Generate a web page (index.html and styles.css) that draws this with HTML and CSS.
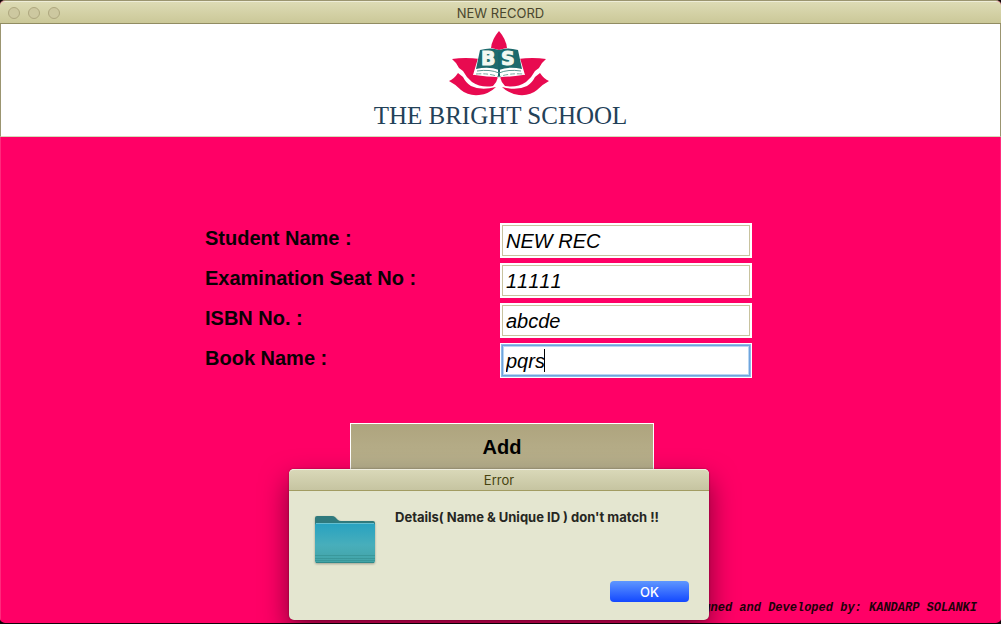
FILE: index.html
```html
<!DOCTYPE html>
<html lang="en">
<head>
<meta charset="utf-8">
<title>NEW RECORD</title>
<link rel="stylesheet" href="styles.css">
</head>
<body>
<div class="window">
  <header class="titlebar">
    <div class="lights">
      <button class="light" type="button" aria-label="Close"></button>
      <button class="light" type="button" aria-label="Minimize"></button>
      <button class="light" type="button" aria-label="Zoom"></button>
    </div>
    <h1 class="window-title">NEW RECORD</h1>
  </header>
  <div class="banner">
    <svg class="logo" viewBox="0 0 103 68" role="img" aria-label="Lotus with an open book">
      <defs>
        <g id="petals">
          <path d="M5 29Q18 27 33 29L28 45Q40 47 51 47Q50 52 46 56Q34 58 25 52Q19 47 16 41L12 38Q10 33 5 29Z"/>
          <path d="M11 43Q7 49 2 51Q8 54 14 60Q21 66 32 65Q42 64 49 57Q34 61 24 56Q19 53 16 47Z"/>
        </g>
      </defs>
      <g fill="#e80a50">
        <path d="M52 1Q45 9 44 18L47 25H58L60 18Q59 9 52 1Z"/>
        <use href="#petals"/>
        <use href="#petals" transform="translate(104 0) scale(-1 1)"/>
      </g>
      <path d="M34 18Q44 17 52 20Q60 17 70 18L78 45Q62 43 52 48Q42 43 26 45Z" fill="#fff"/>
      <path d="M33 20Q44 17 52 20Q60 17 71 20L75 39Q62 36 52 40Q42 36 29 39Z" fill="#1d6a6d"/>
      <path d="M51 22V47H53V22Z" fill="#17666b"/>
      <path d="M30 41Q43 39 52 43Q61 39 74 41" fill="none" stroke="#5b9690" stroke-width="1"/>
      <path d="M29 44Q43 43 52 47Q61 43 76 44" fill="none" stroke="#79a8a0" stroke-dasharray="5 2"/>
      <g class="logo-letters">
        <text x="34" y="35">B</text>
        <text x="54" y="35">S</text>
      </g>
    </svg>
    <p class="school">THE BRIGHT SCHOOL</p>
  </div>
  <main class="content">
    <form class="form">
      <div class="fields">
        <label for="student">Student Name :</label>
        <div class="field"><input id="student" type="text" value="NEW REC"></div>
        <label for="seat">Examination Seat No :</label>
        <div class="field"><input id="seat" type="text" value="11111"></div>
        <label for="isbn">ISBN No. :</label>
        <div class="field"><input id="isbn" type="text" value="abcde"></div>
        <label for="book">Book Name :</label>
        <div class="field active"><input id="book" type="text" value="pqrs"><span class="caret"></span></div>
      </div>
      <button class="add" type="button">Add</button>
    </form>
    <footer class="credit">Designed and Developed by: KANDARP SOLANKI</footer>
  </main>
</div>
<div class="overlay">
  <section class="dialog" role="alertdialog" aria-labelledby="dialog-title" aria-describedby="dialog-text">
    <h2 class="dialog-title" id="dialog-title">Error</h2>
    <div class="dialog-body">
      <svg class="folder" viewBox="0 0 62 50" aria-hidden="true">
        <defs>
          <linearGradient id="front" x1="0" y1="0" x2="0" y2="1">
            <stop offset="0" stop-color="#27a2c1"/>
            <stop offset=".55" stop-color="#48aebb"/>
            <stop offset="1" stop-color="#42a3a5"/>
          </linearGradient>
        </defs>
        <path d="M1 12V3Q1 1 3 1H18Q20 1 21 2L24 5Q25 6 27 6H59Q61 6 61 8V12Z" fill="#2f7a7d"/>
        <rect x="1" y="8" width="60" height="40" rx="2" fill="url(#front)"/>
        <path d="M2 8.500H60" stroke="#64bfd0"/>
        <path d="M1 40.500H61M1 43.500H61M1 45.500H61" stroke="#359294" opacity=".7"/>
        <path d="M2 47.500H60" stroke="#2f898b"/>
      </svg>
      <p class="message" id="dialog-text">Details( Name &amp; Unique ID ) don't match !!</p>
      <button class="ok" type="button">OK</button>
    </div>
  </section>
</div>
</body>
</html>
```
FILE: styles.css
```css
* { box-sizing: border-box; }

body {
  margin: 0;
  height: 100vh;
  padding-bottom: 1px;
  background: #14060b;
  font-family: Inter, "Liberation Sans", sans-serif;
}

h1, h2, p { margin: 0; }

.window {
  display: flex;
  flex-direction: column;
  height: 100%;
  border: 1px solid #9b9570;
  border-width: 1px 0 0;
  border-radius: 5px;
  background: #ff0066;
  overflow: hidden;
}

.titlebar {
  display: grid;
  grid-template-columns: 1fr auto 1fr;
  align-items: center;
  height: 23px;
  padding: 0 8px;
  background: linear-gradient(#dddbb5, #cbc898);
  border-top: 1px solid #eeedd8;
  border-bottom: 1px solid #918c62;
}

.lights { display: flex; gap: 8px; }

.light {
  width: 12px;
  height: 12px;
  padding: 0;
  border: 1px solid #aea77e;
  border-radius: 50%;
  background: #cdc8a0;
}

.window-title {
  font-size: 13px;
  font-weight: 400;
  line-height: 20px;
  color: #49462d;
}

.banner {
  display: flex;
  flex-direction: column;
  align-items: center;
  height: 113px;
  padding-top: 6px;
  background: #fff;
  border: 1px solid #9b9570;
  border-width: 0 1px 1px;
  border-bottom-color: #d8d8b8;
}

.logo {
  width: 103px;
  height: 68px;
  margin-right: 4px;
}

.logo-letters {
  font: bold 19px "DejaVu Sans", sans-serif;
  fill: #f3f8f1;
  stroke: #f3f8f1;
  stroke-width: 1px;
}

.school {
  margin-top: 3px;
  font-family: "Liberation Serif", serif;
  font-size: 25px;
  line-height: 30px;
  color: #234158;
}

.content {
  flex: 1;
  display: flex;
  flex-direction: column;
  border: 1px solid #ff2a7c;
  border-width: 0 1px;
}

.form {
  display: flex;
  flex-direction: column;
  align-items: center;
  padding-top: 86px;
}

.fields {
  display: grid;
  grid-template-columns: 295px 252px;
  gap: 5px 0;
  margin-right: 44px;
}

.fields label {
  font: bold 20px/30px "Liberation Sans", sans-serif;
  color: #0a0004;
}

.field {
  position: relative;
  height: 35px;
  padding: 2px;
  background: #fff;
}

.field input {
  display: block;
  width: 100%;
  height: 31px;
  padding: 1px 3px 0;
  border: 1px solid #c8c39f;
  background: #fff;
  font: italic 20px "Liberation Sans", sans-serif;
  font-kerning: none;
  color: #000;
}

.field.active input {
  border-color: #6fa5dc;
  box-shadow: 0 0 0 1px #8fbbe8, inset 0 0 0 1px #b9d6f3;
  outline: none;
}

.caret {
  position: absolute;
  left: 44px;
  top: 6px;
  width: 1px;
  height: 23px;
  background: #000;
}

.add {
  width: 304px;
  height: 48px;
  margin-top: 45px;
  margin-left: 3px;
  padding: 0;
  border: 1px solid #fff;
  background: linear-gradient(#aea47e, #bab28e);
  font: bold 20px "Liberation Sans", sans-serif;
  color: #000;
}

.credit {
  margin-top: auto;
  padding: 0 23px 7px;
  text-align: right;
  font: italic bold 12px/16px "Liberation Mono", monospace;
  color: #1c0009;
}

.overlay {
  position: absolute;
  inset: 0;
  display: flex;
  justify-content: center;
  align-items: flex-end;
  padding: 0 3px 4px 0;
  overflow: hidden;
}

.dialog {
  width: 420px;
  border-radius: 5px;
  background: #e4e6d0;
  box-shadow: 0 12px 28px rgba(0, 0, 0, .5), 0 0 2px rgba(0, 0, 0, .4);
}

.dialog-title {
  height: 22px;
  border-top: 1px solid #efeede;
  border-bottom: 1px solid #a29c62;
  border-radius: 5px 5px 0 0;
  background: linear-gradient(#d9d8b8, #c6c4a1);
  font-size: 13px;
  font-weight: 400;
  line-height: 20px;
  text-align: center;
  color: #46430f;
}

.dialog-body {
  display: grid;
  grid-template-columns: 62px 1fr;
  grid-template-rows: 66px 21px;
  column-gap: 19px;
  padding: 24px 20px 18px 25px;
}

.folder {
  width: 62px;
  height: 50px;
  filter: drop-shadow(0 1px 1px rgba(0, 0, 0, .3));
}

.message {
  margin-top: -8px;
  font-size: 13px;
  font-weight: 700;
  line-height: 20px;
  color: #262622;
}

.ok {
  grid-column: 2;
  justify-self: end;
  width: 79px;
  height: 21px;
  padding: 0;
  border: 0;
  border-radius: 4px;
  background: linear-gradient(#5f97ff, #1348ff);
  font: 500 13px Inter, sans-serif;
  color: #fff;
}
```
